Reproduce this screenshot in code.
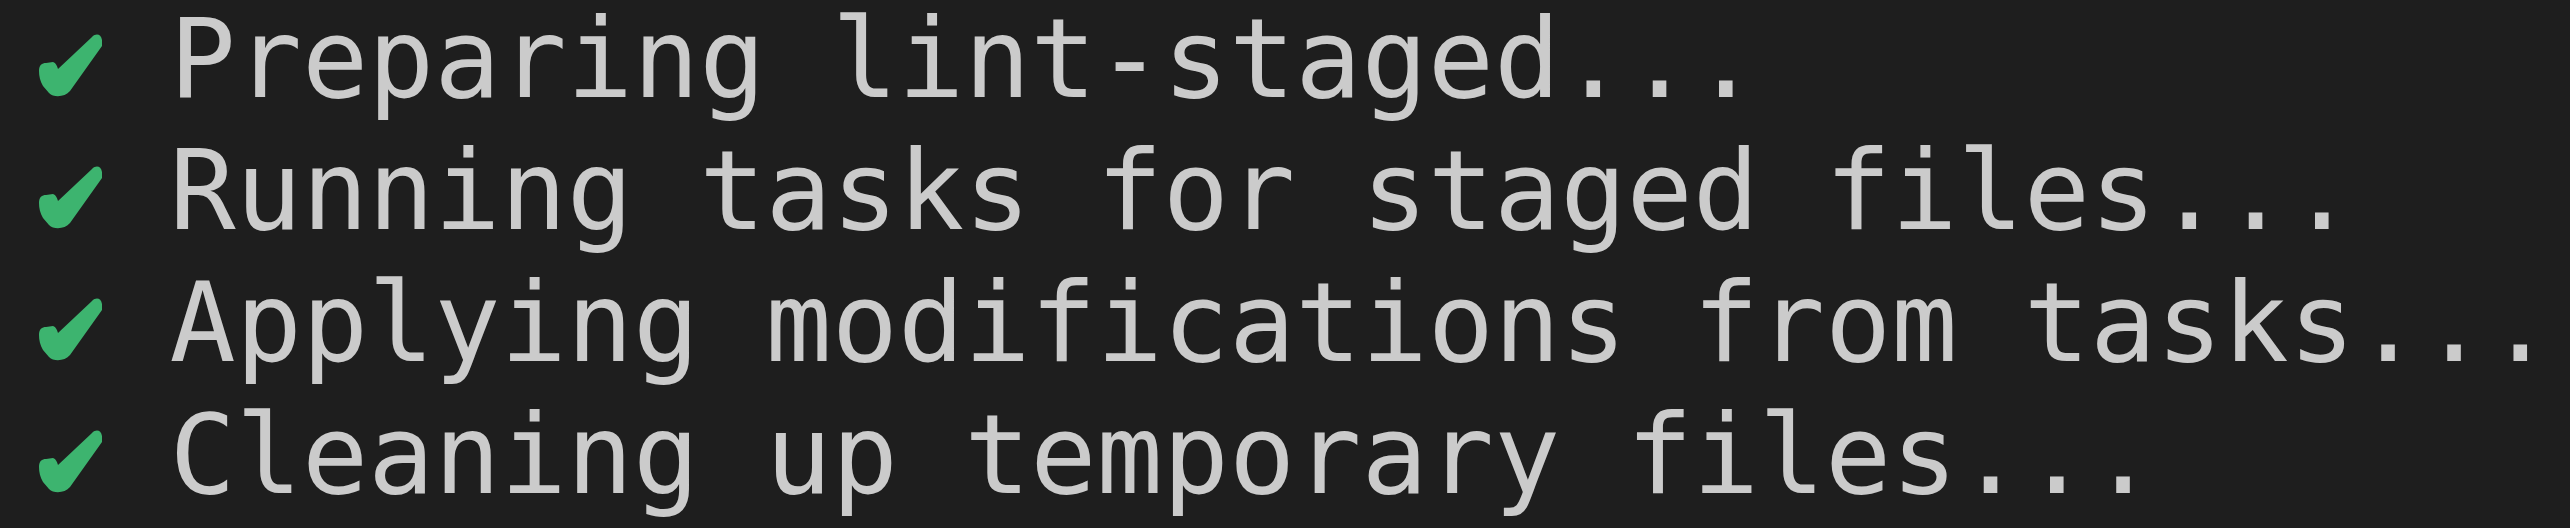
const lines = [
  "Preparing lint-staged...",
  "Running tasks for staged files...",
  "Applying modifications from tasks...",
  "Cleaning up temporary files...",
];

function Check() {
  return (
    <span className="inline-block w-[2ch]">
      <svg
        width="65"
        height="64"
        viewBox="0 0 65 64"
        className="ml-[1px] inline-block align-baseline"
      >
        <path
          d="M1 38 C1 32 4 30 8 30 L15 29 C18 30 19 33 20 36 L54 4 C58 0 63 1 64 7 L64 13 L32 58 C27 64 16 65 11 60 L5 53 C2 48 1 43 1 38 Z"
          fill="#3db46f"
        />
      </svg>
    </span>
  );
}

export default function App() {
  return (
    <div className="h-[528px] w-full overflow-hidden bg-[#1e1e1e]">
      <div className="-mt-[7px] pl-[37px] font-['DejaVu_Sans_Mono',monospace] text-[110px] leading-[132px] text-[#cbcbcb]">
        {lines.map((line) => (
          <div key={line} className="whitespace-pre">
            <Check />
            {line}
          </div>
        ))}
      </div>
    </div>
  );
}
